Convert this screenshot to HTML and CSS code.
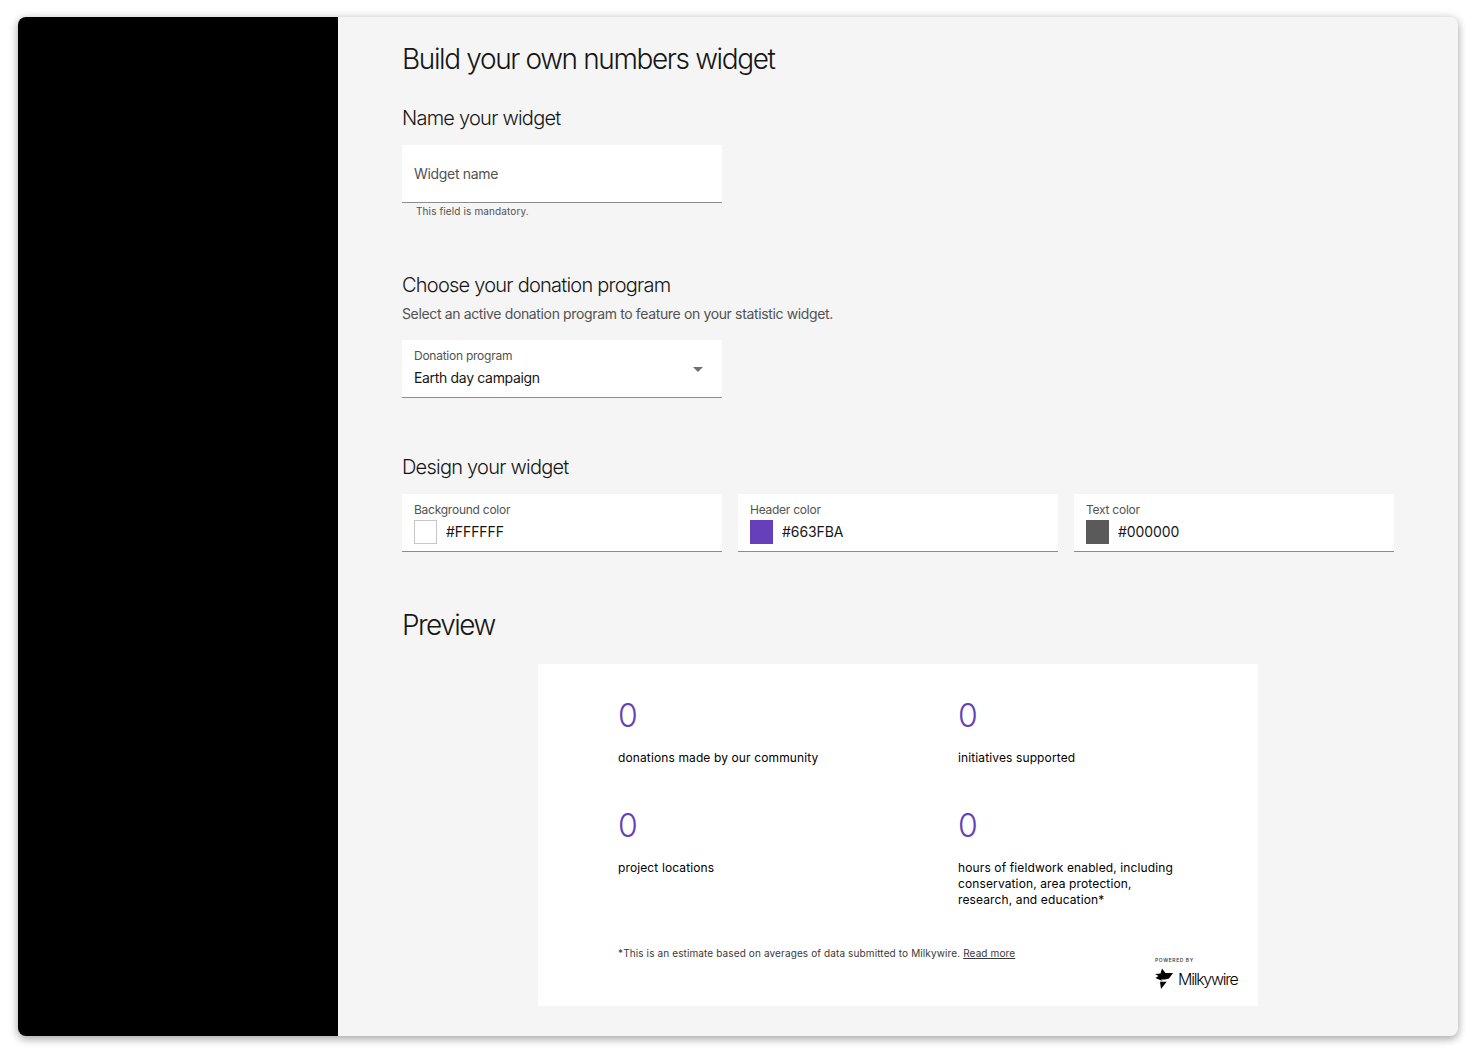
FILE: index.html
```html
<!DOCTYPE html>
<html lang="en">
<head>
<meta charset="utf-8">
<title>Build your own numbers widget</title>
<link rel="stylesheet" href="styles.css">
</head>
<body>
<div class="window">
  <aside class="sidebar"></aside>
  <main class="main">
    <h1 class="title">Build your own numbers widget</h1>
    <section class="sec-name">
      <h2 class="heading">Name your widget</h2>
      <div class="field field-name"><span class="placeholder">Widget name</span></div>
      <p class="helper">This field is mandatory.</p>
    </section>
    <section class="sec-program">
      <h2 class="heading">Choose your donation program</h2>
      <p class="desc">Select an active donation program to feature on your statistic widget.</p>
      <div class="field field-select">
        <div class="field-text">
          <span class="label">Donation program</span>
          <span class="value">Earth day campaign</span>
        </div>
        <span class="caret"></span>
      </div>
    </section>
    <section class="sec-design">
      <h2 class="heading">Design your widget</h2>
      <div class="colors">
        <div class="field field-color">
          <span class="label">Background color</span>
          <div class="color-row"><span class="swatch swatch-white"></span><span class="value">#FFFFFF</span></div>
        </div>
        <div class="field field-color">
          <span class="label">Header color</span>
          <div class="color-row"><span class="swatch swatch-purple"></span><span class="value">#663FBA</span></div>
        </div>
        <div class="field field-color">
          <span class="label">Text color</span>
          <div class="color-row"><span class="swatch swatch-gray"></span><span class="value">#000000</span></div>
        </div>
      </div>
    </section>
    <h2 class="preview-title">Preview</h2>
    <div class="preview">
      <div class="stats">
        <div class="stat"><div class="num">0</div><p class="stat-text">donations made by our community</p></div>
        <div class="stat"><div class="num">0</div><p class="stat-text">initiatives supported</p></div>
        <div class="stat"><div class="num">0</div><p class="stat-text">project locations</p></div>
        <div class="stat"><div class="num">0</div><p class="stat-text">hours of fieldwork enabled, including conservation, area protection, research, and education*</p></div>
      </div>
      <div class="foot">
        <p class="note">*This is an estimate based on averages of data submitted to Milkywire. <a class="more" href="#">Read more</a></p>
        <div class="brand">
          <span class="powered">POWERED BY</span>
          <div class="logo">
            <svg class="logo-mark" width="18" height="21" viewBox="0 0 18 21" aria-hidden="true">
              <path d="M0 6 L5.5 5.5 L7 0.5 L10.5 5 L18 5 L14 10.5 L10 11.5 L6 11.5 L8 13.2 L0.5 10 L3.5 8 Z" fill="#000"/>
              <path d="M5 13.7 L11.7 13.7 L6 21 Z" fill="#000"/>
            </svg>
            <span class="logo-text">Milkywire</span>
          </div>
        </div>
      </div>
    </div>
  </main>
</div>
</body>
</html>
```
FILE: styles.css
```css
* { box-sizing: border-box; }
html, body { margin: 0; padding: 0; }
body {
  background: #fff;
  font-family: Inter, "Liberation Sans", sans-serif;
  padding: 17px 18px 19px;
  height: 1055px;
  overflow: hidden;
  color: #161616;
}
h1, h2, p { margin: 0; font-weight: 300; }
.window {
  display: flex;
  height: 1019px;
  border-radius: 8px;
  overflow: hidden;
  background: #f5f5f5;
  box-shadow: 0 3px 9px rgba(0,0,0,.32), 0 0 12px rgba(0,0,0,.08);
}
.sidebar { width: 320px; flex: none; background: #000; }
.main { flex: 1; padding: 24px 64px 0; }
.title { font-size: 28px; line-height: 36px; letter-spacing: -1.37px; }
.heading { font-size: 20px; line-height: 28px; letter-spacing: -.76px; }
.sec-name { margin-top: 27px; }
.field { background: #fff; border-bottom: 1px solid #8d8d8d; }
.field-name {
  margin-top: 13px;
  width: 320px;
  height: 58px;
  padding: 0 12px;
  display: flex;
  align-items: center;
}
.placeholder { font-size: 14px; color: #525252; letter-spacing: -.32px; }
.helper { font-size: 10px; line-height: 16px; color: #525252; padding: 0 14px; font-weight: 400; letter-spacing: .12px; }
.sec-program { margin-top: 52px; }
.desc { margin-top: 5px; font-size: 14px; line-height: 20px; color: #525252; font-weight: 400; letter-spacing: -.36px; }
.field-select {
  margin-top: 16px;
  width: 320px;
  height: 58px;
  padding: 8px 19px 0 12px;
  display: flex;
  justify-content: space-between;
}
.field-text { display: flex; flex-direction: column; }
.label { display: block; font-size: 12px; line-height: 16px; color: #525252; letter-spacing: -.25px; }
.value { display: block; font-size: 14px; line-height: 20px; color: #161616; margin-top: 4px; letter-spacing: -.33px; }
.caret {
  width: 0; height: 0;
  margin-top: 19px;
  border-left: 5px solid transparent;
  border-right: 5px solid transparent;
  border-top: 5px solid #6f6f6f;
}
.sec-design { margin-top: 55px; }
.colors { margin-top: 13px; display: grid; grid-template-columns: repeat(3, 320px); gap: 16px; }
.field-color { height: 58px; padding: 8px 12px 0; }
.color-row { display: flex; align-items: center; gap: 9px; margin-top: 2px; }
.color-row .value { margin-top: 0; letter-spacing: -.08px; }
.swatch { width: 23px; height: 24px; flex: none; }
.swatch-white { background: #fff; border: 1px solid #c6c6c6; }
.swatch-purple { background: #663fba; }
.swatch-gray { background: #5a5a5a; }
.preview-title { margin-top: 55px; font-size: 28px; line-height: 36px; letter-spacing: -1.55px; }
.preview {
  margin: 21px auto 0;
  width: 720px;
  height: 342px;
  background: #fff;
  padding: 32px 20px 0 80px;
  display: flex;
  flex-direction: column;
}
.stats { display: grid; grid-template-columns: 340px 1fr; row-gap: 0; }
.stat { height: 110px; }
.num { font-size: 32px; line-height: 40px; color: #663fba; font-weight: 300; }
.stat-text { margin-top: 14px; font-size: 12px; line-height: 16px; font-weight: 400; letter-spacing: .12px; color: #000; max-width: 230px; }
.foot { display: flex; justify-content: space-between; margin-top: 29px; }
.note { font-size: 10px; line-height: 16px; font-weight: 400; letter-spacing: .12px; color: #393939; }
.more { color: #393939; }
.brand { margin-top: 13px; width: 84px; }
.powered { display: block; font-size: 5px; line-height: 5px; font-weight: 500; letter-spacing: .58px; color: #333; padding-left: 1px; }
.logo { display: flex; align-items: center; gap: 5px; margin-top: 5px; padding-left: 1px; }
.logo-mark { flex: none; }
.logo-text { font-size: 16px; line-height: 20px; letter-spacing: -1.25px; color: #000; font-weight: 300; }
```
